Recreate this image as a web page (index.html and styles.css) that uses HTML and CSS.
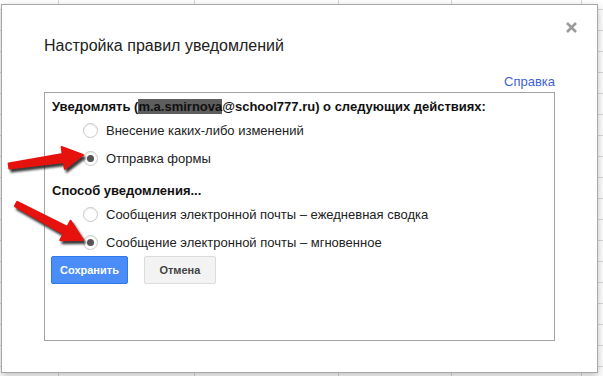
FILE: index.html
```html
<!DOCTYPE html>
<html lang="ru">
<head>
  <meta charset="UTF-8" />
  <meta name="viewport" content="width=device-width, initial-scale=1.0"/>
  <title>Настройка правил уведомлений</title>
  <link rel="stylesheet" href="styles.css">
</head>
<body>
  <div class="dialog">
    <svg class="close" width="11" height="11" viewBox="0 0 11 11">
      <path d="M1 1 L10 10 M10 1 L1 10" stroke="#9a9a9a" stroke-width="2.6" fill="none"/>
    </svg>

    <div class="title">Настройка правил уведомлений</div>
    <div class="help"><a href="#">Справка</a></div>

    <div class="panel">
      <div class="heading">Уведомлять (<span class="masked">m.a.smirnova</span>@school777.ru) о следующих действиях:</div>
      <label class="option"><span class="radio"></span>Внесение каких-либо изменений</label>
      <label class="option"><span class="radio checked"></span>Отправка формы</label>

      <div class="heading method">Способ уведомления...</div>
      <label class="option"><span class="radio"></span>Сообщения электронной почты – ежедневная сводка</label>
      <label class="option"><span class="radio checked"></span>Сообщение электронной почты – мгновенное</label>

      <div class="actions">
        <button class="btn primary">Сохранить</button>
        <button class="btn">Отмена</button>
      </div>
    </div>
  </div>

  <svg class="arrows" width="100" height="260" viewBox="0 0 100 260">
    <defs>
      <filter id="soft"><feGaussianBlur stdDeviation="0.8"/></filter>
    </defs>
    <g transform="translate(2,3)" fill="#1a1a1a" stroke="#1a1a1a" stroke-width="2" stroke-linejoin="round" filter="url(#soft)" opacity="0.85">
      <polygon points="9.4,168.5 63.8,161.9 64.8,168.8 83,155 61.6,147 62.6,153.9 8.6,163.5"/>
      <polygon points="14.8,206.2 63.5,234 60.2,240.2 83,240 70.6,220.8 67.3,227 17.2,201.8"/>
    </g>
    <g fill="#e5120e" stroke="#e5120e" stroke-width="2" stroke-linejoin="round">
      <polygon points="9.4,168.5 63.8,161.9 64.8,168.8 83,155 61.6,147 62.6,153.9 8.6,163.5"/>
      <polygon points="14.8,206.2 63.5,234 60.2,240.2 83,240 70.6,220.8 67.3,227 17.2,201.8"/>
    </g>
  </svg>
</body>
</html>
```

FILE: styles.css
```css
* {
  box-sizing: border-box;
}

html, body {
  margin: 0;
  height: 100%;
}

body {
  font-family: 'Liberation Sans', Arial, sans-serif;
  color: #222;
  background-color: #fff;
  background-image:
    linear-gradient(to right,
      transparent 58px, #d6d6d6 58px, #d6d6d6 59px, transparent 59px,
      transparent 194px, #d6d6d6 194px, #d6d6d6 195px, transparent 195px,
      transparent 338px, #d6d6d6 338px, #d6d6d6 339px, transparent 339px,
      transparent 451px, #d6d6d6 451px, #d6d6d6 452px, transparent 452px,
      transparent 581px, #d6d6d6 581px, #d6d6d6 582px, transparent 582px),
    linear-gradient(#dadada 1px, transparent 1px);
  background-size: 100% 100%, 100% 21px;
  background-position: 0 0, 0 9px;
  position: relative;
}

.dialog {
  position: relative;
  width: 597px;
  height: 369px;
  margin: 4px 0 0 1px;
  padding: 31px 42px 0;
  background: #fff;
  border: 1px solid #a8a8a8;
  box-shadow: 0 3px 8px rgba(0, 0, 0, 0.25);
}

.close {
  position: absolute;
  top: 17px;
  right: 20px;
}

.title {
  font-size: 16px;
  line-height: 20px;
  color: #222;
}

.help {
  margin-top: 18px;
  text-align: right;
  font-size: 13px;
  line-height: 16px;
}

.help a {
  color: #3f62d4;
  text-decoration: none;
}

.panel {
  margin-top: 2px;
  height: 249px;
  padding: 6px 7px;
  border: 1px solid #a3a3a3;
}

.heading {
  font-size: 13px;
  line-height: 16px;
  font-weight: bold;
  color: #111;
}

.masked {
  background: #5e5e5e;
  color: #111;
}

.heading.method {
  margin-top: 11px;
}

.option {
  display: flex;
  align-items: center;
  height: 28px;
  padding-left: 31px;
  font-size: 13px;
  color: #222;
}

.heading + .option {
  margin-top: 1px;
}

.radio {
  width: 15px;
  height: 15px;
  margin-right: 8px;
  border-radius: 50%;
  border: 1px solid #c8c8c8;
  background: #fff;
  box-shadow: inset 0 1px 1px rgba(0, 0, 0, 0.08);
  display: flex;
  align-items: center;
  justify-content: center;
}

.radio.checked::after {
  content: '';
  width: 7px;
  height: 7px;
  border-radius: 50%;
  background: #555;
}

.actions {
  display: flex;
  gap: 16px;
  margin-left: -1px;
}

.btn {
  height: 28px;
  min-width: 72px;
  padding: 0 8px;
  border: 1px solid #dcdcdc;
  border-radius: 2px;
  background: #f3f3f3;
  color: #444;
  font-family: 'Liberation Sans', Arial, sans-serif;
  font-size: 11px;
  font-weight: bold;
}

.btn.primary {
  background: #4a8df8;
  border-color: #3079ed;
  color: #fff;
}

.arrows {
  position: absolute;
  left: 0;
  top: 0;
}
```
